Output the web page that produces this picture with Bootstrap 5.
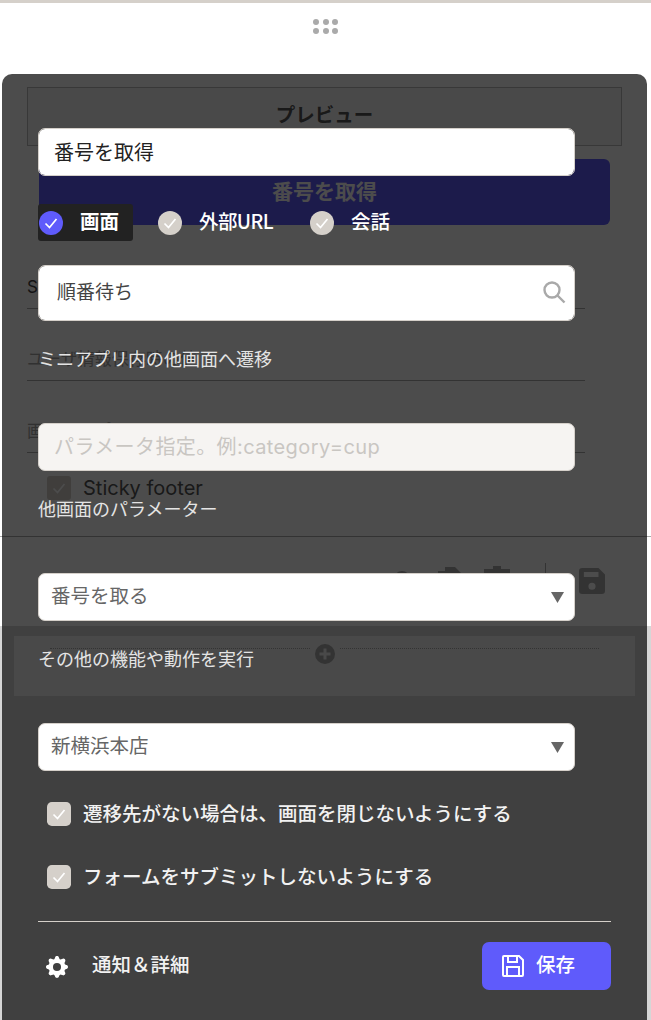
<!DOCTYPE html>
<html lang="ja">
<head>
    <meta charset="UTF-8">
    <meta name="viewport" content="width=device-width, initial-scale=1.0">
    <title>ボタン設定</title>
    <link rel="stylesheet" href="https://cdn.jsdelivr.net/npm/bootstrap@5.3.0/dist/css/bootstrap.min.css">
    <style>
        body {
            font-family: Inter, "Noto Sans CJK JP", sans-serif;
            background: #fff;
        }
        #stage {
            position: relative;
            height: 1020px;
            overflow: hidden;
            border-top: 3px solid #d5d0ca;
        }

        /* page behind the popup */
        .grip {
            width: 25px;
            margin: 16px auto 0;
            display: grid;
            grid-template-columns: repeat(3, 6px);
            gap: 3px 3.5px;
        }
        .grip i {
            width: 6px;
            height: 6px;
            border-radius: 50%;
            background: #aaa;
        }
        .preview-head {
            margin: 53px 29px 0 27px;
            height: 59px;
            padding-top: 13px;
            border: 1px solid #bbb;
            background: #f5f5f5;
            color: #555;
            font-size: 19.5px;
            font-weight: 700;
            line-height: 28px;
            text-align: center;
        }
        .preview-btn {
            margin: 13px 41px 0 39px;
            height: 66px;
            padding-top: 18px;
            border-radius: 6px;
            background: #5f5bfb;
            color: #fff;
            font-size: 21px;
            font-weight: 700;
            line-height: 30px;
            text-align: center;
        }
        .ghost-row {
            margin: 0 66px 0 27px;
            border-bottom: 1px solid #aaa;
            color: #a5a5a5;
            font-size: 17px;
            line-height: 24px;
            height: 72px;
            padding-top: 38px;
        }
        .ghost-row.first {
            height: 84px;
            padding-top: 50px;
            color: #444;
        }
        .ghost-check {
            margin: 23px 0 0 47px;
            height: 24px;
            color: #555;
            font-size: 20px;
            line-height: 24px;
        }
        .ghost-check span {
            width: 24px;
            height: 24px;
            margin-right: 12px;
            border-radius: 3px;
            background: #d5d0ca;
            display: flex;
            align-items: center;
            justify-content: center;
        }
        .ghost-tools {
            height: 90px;
            margin-top: 36px;
            border-top: 1px solid #aaa;
            padding: 26px 46px 0 0;
            color: #aaa;
        }
        .ghost-tools .sep {
            width: 1px;
            height: 37px;
            margin: 0 33px 0 35px;
            background: #aaa;
        }
        .tool-q { margin: 6px 27px 0 0; }
        .tool-file { margin: 4px 22px 0 0; }
        .tool-trash { margin-top: 3px; }
        .tool-save { margin-top: 5px; }
        .ghost-foot {
            height: 400px;
            background: #d6d6d6;
            padding: 10px 16px 0 14px;
        }
        .ghost-band {
            position: relative;
            height: 60px;
            background: #f4f4f4;
            padding: 12px 36px 0;
        }
        .ghost-band hr {
            flex: 1;
            margin: 0;
            border: 0;
            border-top: 1px dotted #aaa;
            opacity: 1;
        }
        .ghost-band svg {
            margin: -4px 5px 0;
            color: #aaa;
        }

        /* popup */
        .sheet {
            position: absolute;
            top: 71px;
            left: 2px;
            width: 645px;
            height: 960px;
            padding: 54px 36px 0;
            border-radius: 10px;
            background: rgba(0, 0, 0, .7);
            color: #fff;
        }
        .sheet .form-control,
        .sheet .form-select {
            width: 537px;
            height: 48px;
            border: 1px solid #d5d0ca;
            border-radius: 7px;
            box-shadow: none;
        }
        .sheet .form-control {
            padding: 0 15px 2px;
            color: #222;
            font-size: 20px;
        }
        .sheet .form-select {
            margin-top: 51px;
            padding: 0 12px;
            color: #666;
            font-size: 19.5px;
            background-image: url("data:image/svg+xml,%3csvg xmlns='http://www.w3.org/2000/svg' viewBox='0 0 13 11'%3e%3cpath fill='%23666' d='M0 0h13L6.500 11z'/%3e%3c/svg%3e");
            background-size: 13px 11px;
            background-position: right 10px center;
        }
        .sheet .form-control.search-field {
            height: 56px;
            padding: 0 18px 5px;
            color: #444;
            font-size: 19px;
        }
        .search-wrap {
            position: relative;
            width: 537px;
            margin-top: 24px;
        }
        .search-wrap svg {
            position: absolute;
            top: 15px;
            right: 9px;
            color: #a9a9a9;
        }
        .sheet .form-control.param-field {
            margin-top: 51px;
            padding-bottom: 0;
            background: #f6f4f2;
            letter-spacing: .4px;
        }
        .param-field::placeholder {
            color: #c9c6c2;
            opacity: 1;
        }
        .kind-row {
            margin-top: 28px;
            height: 37px;
            color: #fff;
            font-family: "Noto Sans CJK JP", sans-serif;
            font-size: 19.5px;
            font-weight: 500;
        }
        .kind-item {
            height: 37px;
            display: flex;
            align-items: center;
            gap: 17px;
            border-radius: 3px;
        }
        .kind-item span {
            margin-top: -3px;
        }
        .kind-item.picked {
            width: 95px;
            padding-left: 1px;
            background: #222;
            font-weight: 700;
        }
        .kind-item.outer {
            margin-left: 25px;
            letter-spacing: -.6px;
        }
        .kind-item.talk {
            margin-left: 37px;
        }
        .kind-item input[type=checkbox]:checked,
        .opt-check input[type=checkbox]:checked {
            width: 24px;
            height: 24px;
            margin: 0;
            flex: none;
            border: 0;
            opacity: 1;
            background-color: #d5d0ca;
            background-size: 24px 24px;
            --bs-form-check-bg-image: url("data:image/svg+xml,%3csvg xmlns='http://www.w3.org/2000/svg' viewBox='0 0 24 24'%3e%3cpath fill='none' stroke='%23fff' stroke-width='1.700' d='M6.500 12.500 10.500 16.500 17.500 8'/%3e%3c/svg%3e");
        }
        .kind-item.picked input[type=checkbox]:checked {
            background-color: #5f5bfb;
        }
        .field-label {
            margin: 27px 0 0;
            color: #e4e4e4;
            font-size: 18px;
            line-height: 24px;
        }
        .opt-check {
            display: flex;
            align-items: center;
            gap: 12px;
            margin: 39px 0 0 9px;
            min-height: 24px;
            color: #f2f2f2;
            font-size: 19.5px;
            font-weight: 500;
            line-height: 24px;
        }
        .sheet .form-select + .opt-check {
            margin-top: 31px;
        }
        .sheet-rule {
            width: 573px;
            margin: 32px 0 0;
            border-top: 1px solid #d5d0ca;
            opacity: 1;
        }
        .sheet-foot {
            width: 573px;
            margin-top: 20px;
            height: 48px;
        }
        .detail-link {
            color: #f2f2f2;
            font-size: 19.5px;
            font-weight: 500;
            line-height: 24px;
            text-decoration: none;
            padding-left: 8px;
        }
        .detail-link svg {
            margin-top: 2px;
        }
        .detail-link span {
            margin-top: -2px;
        }
        .save-btn {
            width: 129px;
            height: 48px;
            padding: 0 0 0 20px;
            display: flex;
            align-items: center;
            gap: 12px;
            border: 0;
            border-radius: 7px;
            background: #5f5bfb;
            color: #fff;
            font-size: 19.5px;
            font-weight: 500;
        }
    </style>
</head>
<body>
    <div id="stage">
        <div class="grip"><i></i><i></i><i></i><i></i><i></i><i></i></div>
        <div class="preview-head">プレビュー</div>
        <div class="preview-btn">番号を取得</div>

        <div class="ghost-row first">SEO設定</div>
        <div class="ghost-row">ユーザ情報保存時の値</div>
        <div class="ghost-row">画面コンポーネント</div>
        <div class="ghost-check d-flex align-items-center">
            <span>
                <svg width="24" height="24" viewBox="0 0 24 24" fill="none" stroke="#fff" stroke-width="1.700"><path d="M6.500 12.500 10.500 16.500 17.500 8"/></svg>
            </span>
            Sticky footer
        </div>

        <div class="ghost-tools d-flex justify-content-end align-items-start">
            <svg class="tool-q" width="18" height="26" viewBox="0 0 18 26" fill="none" stroke="currentColor" stroke-width="4"><path d="M3 10a6 6 0 0 1 12 0c0 4-6 5-6 9"/></svg>
            <svg class="tool-file" width="24" height="26" viewBox="0 0 24 26" fill="currentColor"><path d="M7 0h10l7 7v19H0V4h7z"/></svg>
            <svg class="tool-trash" width="26" height="26" viewBox="0 0 26 26" fill="currentColor"><path d="M9 0h8v3h9v4H0V3h9zM2 9h22v17H2z"/></svg>
            <span class="sep"></span>
            <svg class="tool-save" width="26" height="26" viewBox="0 0 16 16" fill="currentColor">
                <path fill-rule="evenodd" d="M2 0h10l4 4v10a2 2 0 0 1-2 2H2a2 2 0 0 1-2-2V2a2 2 0 0 1 2-2zm1 2.500v3h9v-3H3zM8 9a2.200 2.200 0 1 0 0 4.400A2.200 2.200 0 0 0 8 9z"/>
            </svg>
        </div>

        <div class="ghost-foot">
            <div class="ghost-band d-flex align-items-start">
                <hr>
                <svg width="20" height="20" viewBox="0 0 20 20" fill="currentColor">
                    <path fill-rule="evenodd" d="M10 0a10 10 0 1 1 0 20 10 10 0 0 1 0-20zM8.500 4.500v4h-4v3h4v4h3v-4h4v-3h-4v-4h-3z"/>
                </svg>
                <hr>
            </div>
        </div>

        <div class="sheet">
            <input type="text" class="form-control" value="番号を取得">

            <div class="kind-row d-flex">
                <label class="kind-item picked"><input class="form-check-input rounded-circle" type="checkbox" checked><span>画面</span></label>
                <label class="kind-item outer"><input class="form-check-input rounded-circle" type="checkbox" checked><span>外部URL</span></label>
                <label class="kind-item talk"><input class="form-check-input rounded-circle" type="checkbox" checked><span>会話</span></label>
            </div>

            <div class="search-wrap">
                <input type="text" class="form-control search-field" value="順番待ち">
                <svg width="24" height="24" viewBox="0 0 24 24" fill="none" stroke="currentColor" stroke-width="2.400">
                    <circle cx="10" cy="10" r="7.500"/>
                    <path d="M15.500 15.500 22.500 22.500"/>
                </svg>
            </div>

            <p class="field-label">ミニアプリ内の他画面へ遷移</p>
            <input type="text" class="form-control param-field" placeholder="パラメータ指定。例:category=cup">
            <p class="field-label">他画面のパラメーター</p>

            <select class="form-select">
                <option>番号を取る</option>
            </select>
            <p class="field-label">その他の機能や動作を実行</p>

            <select class="form-select">
                <option>新横浜本店</option>
            </select>

            <label class="opt-check"><input class="form-check-input" type="checkbox" checked>遷移先がない場合は、画面を閉じないようにする</label>
            <label class="opt-check"><input class="form-check-input" type="checkbox" checked>フォームをサブミットしないようにする</label>

            <hr class="sheet-rule">

            <div class="sheet-foot d-flex justify-content-between align-items-center">
                <a href="#" class="detail-link d-flex align-items-center gap-4">
                    <svg width="22" height="22" viewBox="0 0 16 16" fill="#fff">
                        <path d="M9.405 1.050c-.413-1.400-2.397-1.400-2.810 0l-.100.340a1.464 1.464 0 0 1-2.105.872l-.310-.170c-1.283-.698-2.686.705-1.987 1.987l.169.311c.446.820.023 1.841-.872 2.105l-.340.100c-1.400.413-1.400 2.397 0 2.810l.340.100a1.464 1.464 0 0 1 .872 2.105l-.170.310c-.698 1.283.705 2.686 1.987 1.987l.311-.169a1.464 1.464 0 0 1 2.105.872l.100.340c.413 1.400 2.397 1.400 2.810 0l.100-.340a1.464 1.464 0 0 1 2.105-.872l.310.170c1.283.698 2.686-.705 1.987-1.987l-.169-.311a1.464 1.464 0 0 1 .872-2.105l.340-.100c1.400-.413 1.400-2.397 0-2.810l-.340-.100a1.464 1.464 0 0 1-.872-2.105l.170-.310c.698-1.283-.705-2.686-1.987-1.987l-.311.169a1.464 1.464 0 0 1-2.105-.872l-.100-.340zM8 10.930a2.929 2.929 0 1 1 0-5.860 2.929 2.929 0 0 1 0 5.858z"/>
                    </svg>
                    <span>通知＆詳細</span>
                </a>
                <button type="button" class="btn save-btn">
                    <svg width="22" height="22" viewBox="0 0 22 22" fill="none" stroke="#fff" stroke-width="2">
                        <path d="M2 1h15l4 4v15a1 1 0 0 1-1 1H2a1 1 0 0 1-1-1V2a1 1 0 0 1 1-1z"/>
                        <path d="M6 1v6h9V1M5 21v-9h12v9"/>
                    </svg>
                    保存
                </button>
            </div>
        </div>
    </div>
    <script src="https://cdn.jsdelivr.net/npm/bootstrap@5.3.0/dist/js/bootstrap.bundle.min.js"></script>
</body>
</html>
